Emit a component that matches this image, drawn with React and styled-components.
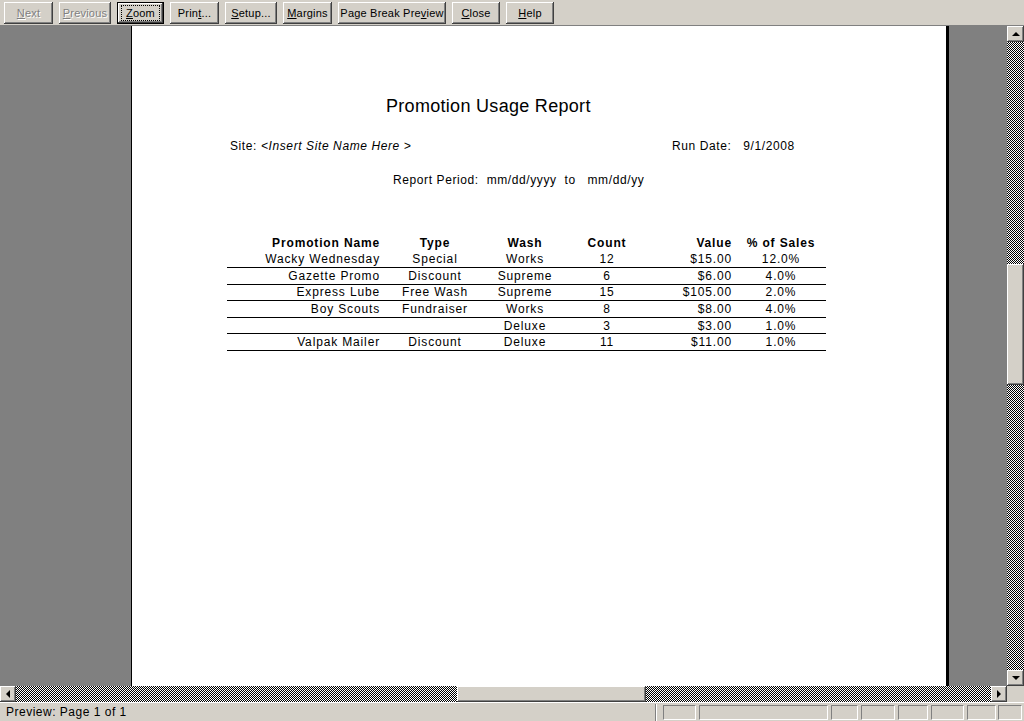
import React from "react";
import styled, { createGlobalStyle, css } from "styled-components";

const GlobalStyle = createGlobalStyle`
  html, body {
    margin: 0;
    padding: 0;
    overflow: hidden;
    background: #d4d0c8;
  }
`;

const raised = css`
  background: #d4d0c8;
  box-shadow: inset -1px -1px #404040, inset 1px 1px #ffffff,
    inset -2px -2px #808080, inset 2px 2px #d4d0c8;
`;

const Window = styled.div`
  width: 1024px;
  height: 721px;
  display: flex;
  flex-direction: column;
  background: #d4d0c8;
  font-family: "Liberation Sans", Arial, sans-serif;
`;

const Toolbar = styled.div`
  height: 26px;
  flex: none;
  display: flex;
  align-items: flex-start;
  gap: 6px;
  padding: 2px 0 0 4px;
  box-sizing: border-box;
  border-bottom: 1px solid #808080;
`;

const Button = styled.button`
  ${raised};
  width: ${(p) => p.$w}px;
  height: 22px;
  border: none;
  padding: 0;
  margin: 0;
  font-family: "Liberation Sans", Arial, sans-serif;
  font-size: 11px;
  letter-spacing: 0.2px;
  color: ${(p) => (p.disabled ? "#808080" : "#000")};
  text-shadow: ${(p) => (p.disabled ? "1px 1px #ffffff" : "none")};
  display: flex;
  align-items: center;
  justify-content: center;
  ${(p) =>
    p.$default &&
    css`
      border: 1px solid #000;
    `}
  u {
    text-decoration: underline;
  }
`;

const Focus = styled.span`
  border: 1px dotted #000;
  padding: 1px 4px;
  line-height: 12px;
`;

const Body = styled.div`
  flex: 1;
  display: flex;
  min-height: 0;
`;

const Preview = styled.div`
  flex: 1;
  min-width: 0;
  background: #808080;
  overflow: hidden;
  display: flex;
`;

const Page = styled.div`
  flex: none;
  margin-left: 131px;
  width: 818px;
  background: #ffffff;
  border-left: 1px solid #000;
  border-right: 3px solid #000;
  padding: 69px 0 0 95px;
  box-sizing: border-box;
  color: #000;
  font-family: "Liberation Sans", Arial, sans-serif;
  font-size: 12px;
  letter-spacing: 0.6px;
`;

const Title = styled.div`
  margin-left: 159px;
  font-size: 18px;
  line-height: 22px;
  letter-spacing: 0.3px;
`;

const SiteRow = styled.div`
  display: flex;
  margin-top: 21px;
  line-height: 16px;
  padding-left: 3px;
`;

const Site = styled.div`
  width: 442px;
  em {
    font-style: italic;
  }
`;

const Pre = styled.div`
  white-space: pre;
  line-height: 16px;
  ${(p) =>
    p.$indent &&
    css`
      margin-left: ${p.$indent}px;
    `}
  ${(p) =>
    p.$top &&
    css`
      margin-top: ${p.$top}px;
    `}
`;

const Table = styled.div`
  margin-top: 47px;
  width: 599px;
`;

const cols = [
  { w: 163, align: "right", pad: 10 },
  { w: 90, align: "center" },
  { w: 90, align: "center" },
  { w: 74, align: "center" },
  { w: 98, align: "right", pad: 10 },
  { w: 78, align: "center" },
];

const Row = styled.div`
  display: flex;
  height: ${(p) => (p.$head ? 16.5 : 16.6)}px;
  box-sizing: border-box;
  border-bottom: ${(p) => (p.$head ? "none" : "1px solid #000")};
  align-items: center;
  font-weight: ${(p) => (p.$head ? "bold" : "normal")};
  letter-spacing: ${(p) => (p.$head ? "0.85px" : "0.85px")};
`;

const Cell = styled.div`
  width: ${(p) => p.$w}px;
  text-align: ${(p) => p.$align};
  padding-right: ${(p) => p.$pad || 0}px;
  box-sizing: border-box;
  white-space: nowrap;
  line-height: 14px;
`;

const VScroll = styled.div`
  width: 17px;
  flex: none;
  display: flex;
  flex-direction: column;
  background-color: #ffffff;
  background-image: repeating-conic-gradient(#000 0 25%, #fff 0 50%);
  background-size: 2px 2px;
`;

const HScroll = styled.div`
  height: 16px;
  flex: none;
  display: flex;
`;

const HTrack = styled.div`
  flex: 1;
  display: flex;
  background-color: #ffffff;
  background-image: repeating-conic-gradient(#000 0 25%, #fff 0 50%);
  background-size: 2px 2px;
`;

const ScrollBtn = styled.div`
  ${raised};
  width: ${(p) => (p.$v ? 17 : 16)}px;
  height: 16px;
  flex: none;
  display: flex;
  align-items: center;
  justify-content: center;
`;

const Thumb = styled.div`
  ${raised};
  flex: none;
  ${(p) =>
    p.$v
      ? css`
          height: 121px;
          margin-top: ${p.$at}px;
        `
      : css`
          width: 189px;
          margin-left: ${p.$at}px;
        `}
`;

const Spacer = styled.div`
  flex: 1;
`;

const Corner = styled.div`
  width: 17px;
  background: #d4d0c8;
`;

const Arrow = styled.span`
  width: 0;
  height: 0;
  border-style: solid;
  ${(p) =>
    p.$dir === "up" &&
    css`
      border-width: 0 4px 4px 4px;
      border-color: transparent transparent #000 transparent;
    `}
  ${(p) =>
    p.$dir === "down" &&
    css`
      border-width: 4px 4px 0 4px;
      border-color: #000 transparent transparent transparent;
    `}
  ${(p) =>
    p.$dir === "left" &&
    css`
      border-width: 4px 4px 4px 0;
      border-color: transparent #000 transparent transparent;
    `}
  ${(p) =>
    p.$dir === "right" &&
    css`
      border-width: 4px 0 4px 4px;
      border-color: transparent transparent transparent #000;
    `}
`;

const StatusBar = styled.div`
  height: 19px;
  flex: none;
  display: flex;
  align-items: center;
  font-size: 12px;
  border-top: 1px solid #ffffff;
  box-sizing: border-box;
`;

const StatusText = styled.div`
  width: 649px;
  padding-left: 6px;
  height: 17px;
  line-height: 17px;
  letter-spacing: 0.5px;
  border-right: 1px solid #808080;
  box-shadow: 1px 0 #ffffff;
`;

const Panel = styled.div`
  width: ${(p) => p.$w}px;
  margin-left: ${(p) => p.$gap}px;
  height: 15px;
  box-sizing: border-box;
  border: 1px solid;
  border-color: #808080 #ffffff #ffffff #808080;
`;

const buttons = [
  { w: 49, pre: "", key: "N", post: "ext", disabled: true },
  { w: 52, pre: "", key: "P", post: "revious", disabled: true },
  { w: 47, pre: "", key: "Z", post: "oom", def: true },
  { w: 49, pre: "Prin", key: "t", post: "..." },
  { w: 52, pre: "", key: "S", post: "etup..." },
  { w: 49, pre: "", key: "M", post: "argins" },
  { w: 108, pre: "Page Break Pre", key: "v", post: "iew" },
  { w: 48, pre: "", key: "C", post: "lose" },
  { w: 48, pre: "", key: "H", post: "elp" },
];

const rows = [
  ["Wacky Wednesday", "Special", "Works", "12", "$15.00", "12.0%"],
  ["Gazette Promo", "Discount", "Supreme", "6", "$6.00", "4.0%"],
  ["Express Lube", "Free Wash", "Supreme", "15", "$105.00", "2.0%"],
  ["Boy Scouts", "Fundraiser", "Works", "8", "$8.00", "4.0%"],
  ["", "", "Deluxe", "3", "$3.00", "1.0%"],
  ["Valpak Mailer", "Discount", "Deluxe", "11", "$11.00", "1.0%"],
];

const headers = ["Promotion Name", "Type", "Wash", "Count", "Value", "% of Sales"];

const panels = [
  { w: 33, gap: 7 },
  { w: 129, gap: 3 },
  { w: 27, gap: 3 },
  { w: 34, gap: 3 },
  { w: 30, gap: 3 },
  { w: 33, gap: 3 },
  { w: 29, gap: 3 },
  { w: 24, gap: 2 },
];

const TableRow = ({ cells, head }) => (
  <Row $head={head}>
    {cells.map((c, i) => (
      <Cell key={i} $w={cols[i].w} $align={cols[i].align} $pad={cols[i].pad}>
        {c}
      </Cell>
    ))}
  </Row>
);

export default function App() {
  return (
    <Window>
      <GlobalStyle />
      <Toolbar>
        {buttons.map((b) => {
          const label = (
            <>
              {b.pre}
              <u>{b.key}</u>
              {b.post}
            </>
          );
          return (
            <Button key={b.key} $w={b.w} disabled={b.disabled} $default={b.def}>
              {b.def ? <Focus>{label}</Focus> : label}
            </Button>
          );
        })}
      </Toolbar>
      <Body>
        <Preview>
          <Page>
            <Title>Promotion Usage Report</Title>
            <SiteRow>
              <Site>
                Site: <em>&lt;Insert Site Name Here &gt;</em>
              </Site>
              <Pre>{"Run Date:   9/1/2008"}</Pre>
            </SiteRow>
            <Pre $indent={166} $top={18}>
              {"Report Period:  mm/dd/yyyy  to   mm/dd/yy"}
            </Pre>
            <Table>
              <TableRow cells={headers} head />
              {rows.map((r, i) => (
                <TableRow key={i} cells={r} />
              ))}
            </Table>
          </Page>
        </Preview>
        <VScroll>
          <ScrollBtn $v>
            <Arrow $dir="up" />
          </ScrollBtn>
          <Thumb $v $at={222} />
          <Spacer />
          <ScrollBtn $v>
            <Arrow $dir="down" />
          </ScrollBtn>
        </VScroll>
      </Body>
      <HScroll>
        <HTrack>
          <ScrollBtn>
            <Arrow $dir="left" />
          </ScrollBtn>
          <Thumb $at={441} />
          <Spacer />
          <ScrollBtn>
            <Arrow $dir="right" />
          </ScrollBtn>
        </HTrack>
        <Corner />
      </HScroll>
      <StatusBar>
        <StatusText>Preview: Page 1 of 1</StatusText>
        {panels.map((p, i) => (
          <Panel key={i} $w={p.w} $gap={p.gap} />
        ))}
      </StatusBar>
    </Window>
  );
}
